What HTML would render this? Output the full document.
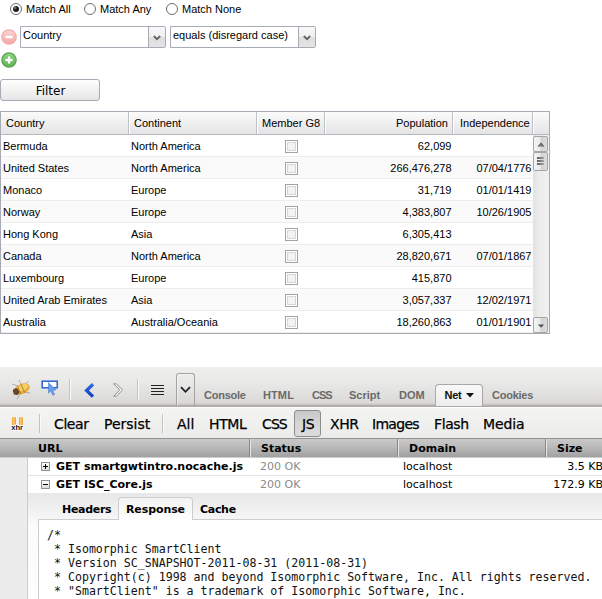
<!DOCTYPE html>
<html><head><meta charset="utf-8">
<style>
html,body{margin:0;padding:0;background:#fff;}
body{width:602px;height:599px;position:relative;overflow:hidden;font-family:"Liberation Sans",sans-serif;font-size:11px;color:#000;}
.a{position:absolute;white-space:nowrap;}
.radio{position:absolute;width:10px;height:10px;border:1px solid #706c68;border-radius:50%;background:#fff;box-sizing:content-box;}
.radio.on::after{content:"";position:absolute;left:2px;top:2px;width:6px;height:6px;border-radius:50%;background:radial-gradient(circle at 35% 32%,#8a8a8a 0,#1a1a1a 38%,#111 100%);}
.sel{position:absolute;height:22px;border:1px solid #a7abb4;background:#fff;box-sizing:border-box;}
.sel .t{position:absolute;left:2px;top:2px;font-size:11px;}
.sel .p{position:absolute;right:0;top:0;width:16px;height:20px;border-left:1px solid #a7abb4;background:linear-gradient(#f8f8f8,#f0f0f0 50%,#dfdfdf 50%,#e4e4e4);}
.sel .p svg{position:absolute;left:4px;top:8px;}
.sel{border-radius:0 2px 2px 0;}
.btn{position:absolute;left:0;top:79px;width:100px;height:22px;box-sizing:border-box;border:1px solid #a7abb4;border-radius:3px;background:linear-gradient(#fefefe,#e6e6e6);font-family:"DejaVu Sans",sans-serif;font-size:12px;text-align:center;line-height:20px;padding-top:1px;text-indent:1px;}
/* grid */
#grid{position:absolute;left:0;top:111px;width:550px;height:223px;box-sizing:border-box;border:1px solid #a7abb4;background:#fff;}
#ghead{position:absolute;left:0;top:0;width:548px;height:22px;background:linear-gradient(#fbfbfb,#e4e4e4);border-bottom:1px solid #b4b8c1;}
.hc{position:absolute;top:0;height:22px;box-sizing:border-box;border-right:1px solid #bcc0c8;box-shadow:1px 0 0 #fff;line-height:22px;padding:0 5px;font-size:11px;white-space:nowrap;}
.row{position:absolute;left:0;width:532px;height:22px;box-sizing:border-box;border-bottom:1px solid #ededed;line-height:21px;font-size:11px;}
.row.alt{background:#fafafa;}
.row span{position:absolute;top:1px;white-space:nowrap;}
.c1{left:2px}.c2{left:130px}.c4{right:81.5px}.c5{right:1.5px}
.cb{position:absolute;left:284px;top:5px;width:11px;height:11px;border:1px solid #a3a3a3;background:#fff;}
.cb::after{content:"";position:absolute;left:1px;top:1px;width:7px;height:7px;border:1px solid #d6d6d6;background:#f3f3f3;}
#sb{position:absolute;left:532px;top:23px;width:16px;height:198px;background:linear-gradient(90deg,#e2e2e2,#ececec 40%,#f1f1f1);}
.sbb{position:absolute;left:0;width:15px;box-sizing:border-box;border:1px solid #a6a6a6;border-radius:2px;background:linear-gradient(90deg,#f4f4f4,#ebebeb 45%,#d3d3d3 58%,#dedede);}


/* firebug */
#fb{position:absolute;left:0;top:367px;width:602px;height:232px;background:#fff;font-family:"DejaVu Sans",sans-serif;font-size:11px;}
#tb1{position:absolute;left:0;top:0;width:602px;height:40px;background:linear-gradient(#eeeeed,#e9e9e8 15px,#dad9d8 36px,#c8c6c4 37.5px,#b3b0ae 38.5px,#a9a6a4 40px);}
#tb2{position:absolute;left:0;top:40px;width:602px;height:31px;background:linear-gradient(#fff 0,#fff 1px,#f4f4f3 1px,#ebebea);}
.vsep{position:absolute;width:1px;background:#c3c3c3;box-shadow:1px 0 0 #fafafa;}
.tab{position:absolute;top:22px;font:bold 11px "Liberation Sans",sans-serif;letter-spacing:-0.25px;color:#6a6a6a;white-space:nowrap;line-height:12px;}
.tw{position:absolute;top:49px;font:14px "DejaVu Sans",sans-serif;letter-spacing:-0.4px;color:#000;-webkit-text-stroke:0.25px #000;white-space:nowrap;line-height:16px;}
#nh{position:absolute;left:0;top:71px;width:602px;height:20px;background:linear-gradient(#929292 0,#929292 1px,#c9c9c9 1px,#bcbcbc 8px,#a0a0a0 19px,#cecece 19px,#cecece 20px);}
#nh b{position:absolute;top:4px;line-height:13px;white-space:nowrap;}
.nsep{position:absolute;top:1px;width:1px;height:18px;background:#878787;box-shadow:1px 0 0 #e6e6e6;margin-left:-1px;}
#gut{position:absolute;left:0;top:91px;width:28px;height:141px;background:#ececec;border-right:1px solid #cbcbcb;box-sizing:border-box;}
.nr{position:absolute;left:28px;width:574px;height:18px;background:#fff;line-height:17px;white-space:nowrap;}
.nr b,.nr span{position:absolute;top:0;}
.twy{position:absolute;left:13px;top:4px;width:7px;height:7px;border:1px solid #8a93a3;background:linear-gradient(#fff,#dcdcdc);}
.twy::before{content:"";position:absolute;left:1px;top:3px;width:5px;height:1px;background:#000;}
.twy.p::after{content:"";position:absolute;left:3px;top:1px;width:1px;height:5px;background:#000;}
#det{position:absolute;left:28px;top:126px;width:574px;height:106px;background:linear-gradient(#e8e8e8 0,#ececec 9px,#f5f5f5 24px,#fcfcfc 34px,#fdfdfd 100%);}
#dtabs{position:absolute;left:0;top:0;width:574px;height:26px;background:transparent;}
.dt{position:absolute;z-index:3;top:10px;letter-spacing:-0.3px;font-weight:bold;line-height:13px;white-space:nowrap;}
#rbox{position:absolute;left:10px;top:26px;width:600px;height:90px;border:1px solid #cdcdcd;background:#fff;}
#rbox pre{position:absolute;left:8px;top:8px;margin:0;font:11.6px/14px "DejaVu Sans Mono","Liberation Mono",monospace;letter-spacing:0;color:#111;}
</style></head><body>
<!-- radios -->
<div class="radio on" style="left:10px;top:3px"></div><div class="a" style="left:26px;top:3px">Match All</div>
<div class="radio" style="left:84px;top:3px"></div><div class="a" style="left:100px;top:3px">Match Any</div>
<div class="radio" style="left:166px;top:3px"></div><div class="a" style="left:182px;top:3px">Match None</div>
<svg class="a" style="left:1px;top:29px" width="16" height="16" viewBox="0 0 16 16"><defs><linearGradient id="gr" x1="0" y1="0" x2="0" y2="1"><stop offset="0" stop-color="#fbd3d3"/><stop offset="1" stop-color="#f4a8a8"/></linearGradient></defs><circle cx="8" cy="8" r="7.8" fill="#f2aaaa"/><circle cx="8" cy="8" r="6.6" fill="url(#gr)"/><rect x="4.3" y="6.8" width="7.4" height="2.4" rx="1" fill="#fff"/></svg>
<div class="sel" style="left:20px;top:26px;width:146px"><span class="t">Country</span><span class="p"><svg width="8" height="6" viewBox="0 0 8 6"><path d="M0.8 1 L4 4.2 L7.2 1" fill="none" stroke="#646464" stroke-width="1.8"/></svg></span></div>
<div class="sel" style="left:170px;top:26px;width:146px"><span class="t">equals (disregard case)</span><span class="p"><svg width="8" height="6" viewBox="0 0 8 6"><path d="M0.8 1 L4 4.2 L7.2 1" fill="none" stroke="#646464" stroke-width="1.8"/></svg></span></div>
<svg class="a" style="left:1px;top:52px" width="16" height="16" viewBox="0 0 16 16"><defs><linearGradient id="gg" x1="0" y1="0" x2="0" y2="1"><stop offset="0" stop-color="#8fd084"/><stop offset="1" stop-color="#62b457"/></linearGradient></defs><circle cx="8" cy="8" r="7.8" fill="#5aa94f"/><circle cx="8" cy="8" r="6.5" fill="url(#gg)"/><rect x="4.4" y="6.9" width="7.2" height="2.3" fill="#fff"/><rect x="6.9" y="4.4" width="2.3" height="7.2" fill="#fff"/></svg>
<div class="btn">Filter</div>
<div id="grid">
 <div id="ghead">
  <div class="hc" style="left:0;width:128px">Country</div>
  <div class="hc" style="left:128px;width:128px">Continent</div>
  <div class="hc" style="left:256px;width:68px">Member G8</div>
  <div class="hc" style="left:324px;width:128px;text-align:right;padding-right:4px">Population</div>
  <div class="hc" style="left:452px;width:80px;padding-left:7px">Independence</div>
 </div>
 <div class="row" style="top:23px"><span class="c1">Bermuda</span><span class="c2">North America</span><i class="cb"></i><span class="c4">62,099</span><span class="c5"></span></div>
 <div class="row alt" style="top:45px"><span class="c1">United States</span><span class="c2">North America</span><i class="cb"></i><span class="c4">266,476,278</span><span class="c5">07/04/1776</span></div>
 <div class="row" style="top:67px"><span class="c1">Monaco</span><span class="c2">Europe</span><i class="cb"></i><span class="c4">31,719</span><span class="c5">01/01/1419</span></div>
 <div class="row alt" style="top:89px"><span class="c1">Norway</span><span class="c2">Europe</span><i class="cb"></i><span class="c4">4,383,807</span><span class="c5">10/26/1905</span></div>
 <div class="row" style="top:111px"><span class="c1">Hong Kong</span><span class="c2">Asia</span><i class="cb"></i><span class="c4">6,305,413</span><span class="c5"></span></div>
 <div class="row alt" style="top:133px"><span class="c1">Canada</span><span class="c2">North America</span><i class="cb"></i><span class="c4">28,820,671</span><span class="c5">07/01/1867</span></div>
 <div class="row" style="top:155px"><span class="c1">Luxembourg</span><span class="c2">Europe</span><i class="cb"></i><span class="c4">415,870</span><span class="c5"></span></div>
 <div class="row alt" style="top:177px"><span class="c1">United Arab Emirates</span><span class="c2">Asia</span><i class="cb"></i><span class="c4">3,057,337</span><span class="c5">12/02/1971</span></div>
 <div class="row" style="top:199px"><span class="c1">Australia</span><span class="c2">Australia/Oceania</span><i class="cb"></i><span class="c4">18,260,863</span><span class="c5">01/01/1901</span></div>
 <div id="sb">
  <div class="sbb" style="top:1px;height:16px"><svg style="position:absolute;left:3px;top:4px" width="8" height="6" viewBox="0 0 8 6"><path d="M0.6 5.4 L4 1.6 L7.4 5.4 L6 5.4 L4 3.4 L2 5.4 Z" fill="#4a4a4a"/><path d="M1.2 5.4 L4 2.4 L6.8 5.4 Z" fill="#777"/></svg></div>
  <div class="sbb" style="top:17px;height:19px"><i style="position:absolute;left:3px;top:4px;width:7px;height:2px;background:linear-gradient(90deg,#5c5c5c,#a8a8a8)"></i><i style="position:absolute;left:3px;top:7px;width:7px;height:2px;background:linear-gradient(90deg,#5c5c5c,#a8a8a8)"></i><i style="position:absolute;left:3px;top:10px;width:7px;height:2px;background:linear-gradient(90deg,#5c5c5c,#a8a8a8)"></i></div>
  <div class="sbb" style="top:182px;height:16px"><svg style="position:absolute;left:3px;top:6px" width="8" height="5" viewBox="0 0 8 5"><path d="M0.8 0.5 L7.2 0.5 L4 3.8 Z" fill="#555"/></svg></div>
 </div>
</div>
<div id="fb">
 <div id="tb1">
  <svg class="a" style="left:8px;top:11px;opacity:.9" width="26" height="24" viewBox="0 0 26 24">
   <g stroke="#8a8a8a" stroke-width="0.7" fill="none"><path d="M10 8 L4 6 M13 6 L11 2 M18 6 L20 3 M9 14 L5 17 M12 16 L9 21 M17 14 L22 15"/></g>
   <g transform="rotate(-24 14 11)"><ellipse cx="14" cy="11" rx="8.2" ry="5" fill="#e9a427"/><ellipse cx="15" cy="10" rx="6" ry="3" fill="#f7cf57"/><ellipse cx="7.5" cy="11" rx="3" ry="3.4" fill="#5b3412"/><path d="M11 7 L11 15 M15 6.3 L15 15.7" stroke="#b06a18" stroke-width="0.8"/></g></svg>
  <svg class="a" style="left:41px;top:13px" width="18" height="18" viewBox="0 0 18 18"><rect x="1.2" y="1.2" width="15" height="6.6" fill="#fff" stroke="#2c5fd2" stroke-width="1.5"/><path d="M7.5 2.5 L7.5 13.2 L9.9 11 L11.8 15.3 L13.6 14.5 L11.7 10.3 L14.8 10 Z" fill="#6b9bea" stroke="#4b7fe0" stroke-width="0.6"/></svg>
  <div class="vsep" style="left:69px;top:12px;height:21px"></div>
  <div class="vsep" style="left:137px;top:12px;height:21px"></div>
  <svg class="a" style="left:84px;top:16px" width="11" height="15" viewBox="0 0 11 15"><defs><linearGradient id="gb" x1="0" y1="0" x2="0" y2="1"><stop offset="0" stop-color="#2a6bec"/><stop offset="1" stop-color="#0d3fc0"/></linearGradient></defs><path d="M9 1.2 L2.6 7.4 L9 13.6" fill="none" stroke="url(#gb)" stroke-width="3.3"/></svg>
  <svg class="a" style="left:112px;top:16px" width="12" height="14" viewBox="0 0 12 14"><path d="M1.6 0.8 L4.4 0.8 L10.6 7 L4.4 13.2 L1.6 13.2 L7.8 7 Z" fill="#f6f6f6" stroke="#8e8e8e" stroke-width="1"/></svg>
  <div class="a" style="left:151px;top:18px;width:13px;height:1px;background:#222;box-shadow:0 3px 0 #222,0 6px 0 #222,0 9px 0 #222"></div>
  <div class="a" style="left:176px;top:6px;width:17px;height:32px;border:1px solid #a3a3a3;border-bottom:none;border-radius:3px 3px 0 0;background:transparent;box-shadow:inset 1px 1px 0 rgba(255,255,255,0.45)"></div>
  <svg class="a" style="left:180px;top:19px" width="11" height="8" viewBox="0 0 11 8"><path d="M1 1.2 L5.5 5.8 L10 1.2" fill="none" stroke="#222" stroke-width="1.8"/></svg>
  <div class="tab" style="left:204px">Console</div>
  <div class="tab" style="left:263px;letter-spacing:0.1px">HTML</div>
  <div class="tab" style="left:312px;letter-spacing:-1px">CSS</div>
  <div class="tab" style="left:349px;letter-spacing:0">Script</div>
  <div class="tab" style="left:399px;letter-spacing:0">DOM</div>
  <div class="a" style="left:435px;top:17px;width:46px;height:21px;border:1px solid #a8a8a8;border-bottom:none;border-radius:4px 4px 0 0;background:linear-gradient(#f8f8f8,#ededed)"></div>
  <div class="tab" style="left:444.5px;color:#111">Net</div>
  <svg class="a" style="left:466px;top:26px" width="8" height="5" viewBox="0 0 8 5"><path d="M0 0 L8 0 L4 4.5 Z" fill="#111"/></svg>
  <div class="tab" style="left:492px">Cookies</div>
 </div>
 <div id="tb2">
  <svg class="a" style="left:11px;top:10px" width="15" height="15" viewBox="0 0 15 15"><rect x="1" y="0.3" width="4" height="8" fill="#f2a93a"/><rect x="2" y="0.3" width="1.5" height="8" fill="#f9c976"/><rect x="8" y="0.3" width="4" height="8" fill="#f2a93a"/><rect x="9" y="0.3" width="1.5" height="8" fill="#f9c976"/><text x="0.3" y="13.2" font-family="Liberation Sans, sans-serif" font-weight="bold" font-size="7.5" fill="#111" stroke="#fff" stroke-width="1.6" paint-order="stroke">xhr</text></svg>
  <div class="vsep" style="left:39px;top:7px;height:19px"></div>
  <div class="vsep" style="left:162px;top:7px;height:19px"></div>
 </div>
 <div class="a" style="left:294px;top:43px;width:25px;height:25px;border:1px solid #8c8c8c;border-radius:3px;background:linear-gradient(#c8c8c8,#d6d6d6 50%,#dcdcdc)"></div>
 <div class="tw" style="left:54px">Clear</div>
 <div class="tw" style="left:104px;letter-spacing:0">Persist</div>
 <div class="tw" style="left:177px;letter-spacing:0">All</div>
 <div class="tw" style="left:209px">HTML</div>
 <div class="tw" style="left:262px;letter-spacing:-0.9px">CSS</div>
 <div class="tw" style="left:302px">JS</div>
 <div class="tw" style="left:330px">XHR</div>
 <div class="tw" style="left:372px;letter-spacing:-0.7px">Images</div>
 <div class="tw" style="left:434px">Flash</div>
 <div class="tw" style="left:483px;letter-spacing:-0.1px">Media</div>
 <div id="nh">
  <b style="left:38px">URL</b><i class="nsep" style="left:250px"></i>
  <b style="left:261px">Status</b><i class="nsep" style="left:398px"></i>
  <b style="left:409px">Domain</b><i class="nsep" style="left:546px"></i>
  <b style="left:557px">Size</b>
 </div>
 <div id="gut"></div>
 <div class="nr" style="top:91px;height:17px;border-bottom:1px solid #e4e4e4"><i class="twy p"></i><b style="left:28px">GET smartgwtintro.nocache.js</b><span style="left:232px;color:#8a8a8a">200 OK</span><span style="left:375px">localhost</span><span style="right:-1px">3.5 KB</span></div>
 <div class="nr" style="top:109px;height:17px"><i class="twy"></i><b style="left:28px">GET ISC_Core.js</b><span style="left:232px;color:#8a8a8a">200 OK</span><span style="left:375px">localhost</span><span style="right:-1px">172.9 KB</span></div>
 <div id="det">
  <div id="dtabs">
   <div class="a" style="left:90px;top:4px;width:75px;height:23px;border:1px solid #cdcdcd;border-bottom:none;border-radius:4px 4px 0 0;background:linear-gradient(#f3f3f3,#fff);box-sizing:border-box;z-index:2"></div>
   <div class="dt" style="left:34px">Headers</div>
   <div class="dt" style="left:98px;letter-spacing:-0.1px">Response</div>
   <div class="dt" style="left:172px">Cache</div>
  </div>
  <div id="rbox"><pre>/*
 * Isomorphic SmartClient
 * Version SC_SNAPSHOT-2011-08-31 (2011-08-31)
 * Copyright(c) 1998 and beyond Isomorphic Software, Inc. All rights reserved.
 * "SmartClient" is a trademark of Isomorphic Software, Inc.
 *</pre></div>
 </div>
</div>
</body></html>
